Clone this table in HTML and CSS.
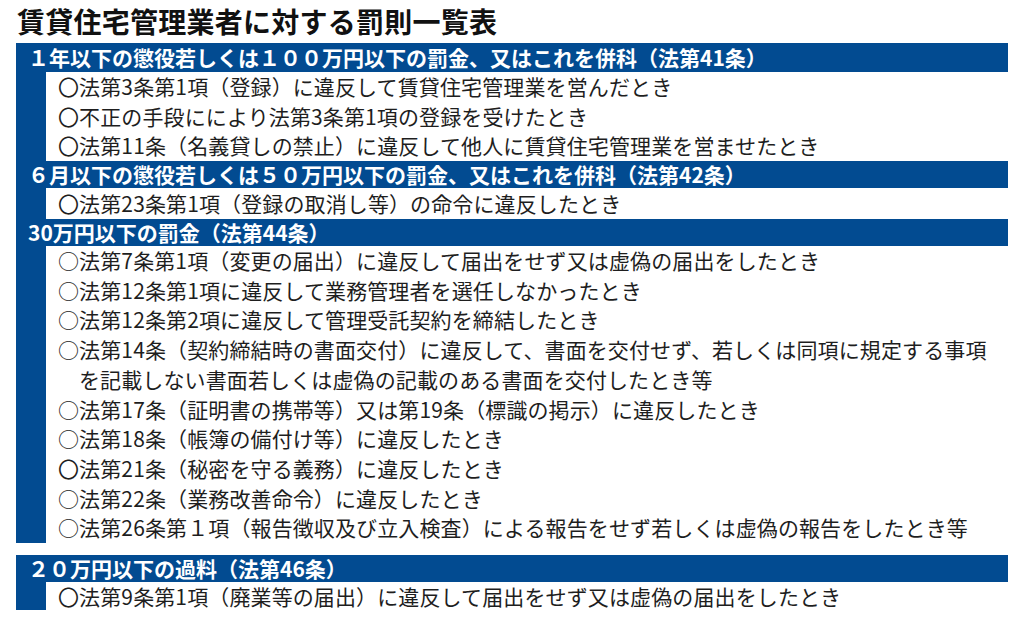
FILE: index.html
```html
<!DOCTYPE html>
<html lang="ja">
<head>
<meta charset="utf-8">
<title>賃貸住宅管理業者に対する罰則一覧表</title>
<link rel="stylesheet" href="styles.css">
</head>
<body>
<div class="page">
  <h1 class="title">賃貸住宅管理業者に対する罰則一覧表</h1>

  <section class="group">
    <div class="bar bar-tall">１年以下の懲役若しくは１００万円以下の罰金、又はこれを併科（法第41条）</div>
    <ul class="items">
      <li>〇法第3条第1項（登録）に違反して賃貸住宅管理業を営んだとき</li>
      <li>〇不正の手段ににより法第3条第1項の登録を受けたとき</li>
      <li>〇法第11条（名義貸しの禁止）に違反して他人に賃貸住宅管理業を営ませたとき</li>
    </ul>
  </section>

  <section class="group">
    <div class="bar">６月以下の懲役若しくは５０万円以下の罰金、又はこれを併科（法第42条）</div>
    <ul class="items items-single">
      <li>〇法第23条第1項（登録の取消し等）の命令に違反したとき</li>
    </ul>
  </section>

  <section class="group">
    <div class="bar">30万円以下の罰金（法第44条）</div>
    <ul class="items">
      <li>○法第7条第1項（変更の届出）に違反して届出をせず又は虚偽の届出をしたとき</li>
      <li>○法第12条第1項に違反して業務管理者を選任しなかったとき</li>
      <li>○法第12条第2項に違反して管理受託契約を締結したとき</li>
      <li>○法第14条（契約締結時の書面交付）に違反して、書面を交付せず、若しくは同項に規定する事項</li>
      <li class="cont">を記載しない書面若しくは虚偽の記載のある書面を交付したとき等</li>
      <li>○法第17条（証明書の携帯等）又は第19条（標識の掲示）に違反したとき</li>
      <li>○法第18条（帳簿の備付け等）に違反したとき</li>
      <li>〇法第21条（秘密を守る義務）に違反したとき</li>
      <li>○法第22条（業務改善命令）に違反したとき</li>
      <li>○法第26条第１項（報告徴収及び立入検査）による報告をせず若しくは虚偽の報告をしたとき等</li>
    </ul>
  </section>

  <section class="group group-last">
    <div class="bar">２０万円以下の過料（法第46条）</div>
    <ul class="items items-last">
      <li>〇法第9条第1項（廃業等の届出）に違反して届出をせず又は虚偽の届出をしたとき</li>
    </ul>
  </section>
</div>
</body>
</html>
```

FILE: styles.css
```css
* { box-sizing: border-box; }

html, body {
  margin: 0;
  padding: 0;
  background: #ffffff;
}

body {
  font-family: "Noto Sans CJK JP", "Noto Sans", sans-serif;
  color: #1e1e1e;
}

.page {
  width: 1024px;
  height: 621px;
  padding: 0 16px 0 16px;
  overflow: hidden;
}

.title {
  margin: 0 0 3px 0;
  padding: 2px 0 0 1px;
  font-size: 28px;
  line-height: 38px;
  font-weight: 700;
  letter-spacing: 0.25px;
  color: #111111;
  white-space: nowrap;
}

.group {
  width: 992px;
}

.group-last {
  margin-top: 12px;
}

.bar {
  background: #024b91;
  color: #ffffff;
  font-weight: 700;
  font-size: 21px;
  height: 27px;
  line-height: 27px;
  padding-left: 12px;
  white-space: nowrap;
}

.bar-tall {
  height: 29px;
  line-height: 29px;
}

.items {
  list-style: none;
  margin: 0;
  padding: 0 0 0 12px;
  border-left: 30px solid #024b91;
}

.items li {
  font-size: 21px;
  line-height: 29.7px;
  height: 29.7px;
  letter-spacing: 0.12px;
  white-space: nowrap;
}

.items-single li {
  height: 31px;
  line-height: 31px;
}

.items-last li {
  height: 28px;
  line-height: 28px;
}

.items li.cont {
  padding-left: 21px;
}
```
